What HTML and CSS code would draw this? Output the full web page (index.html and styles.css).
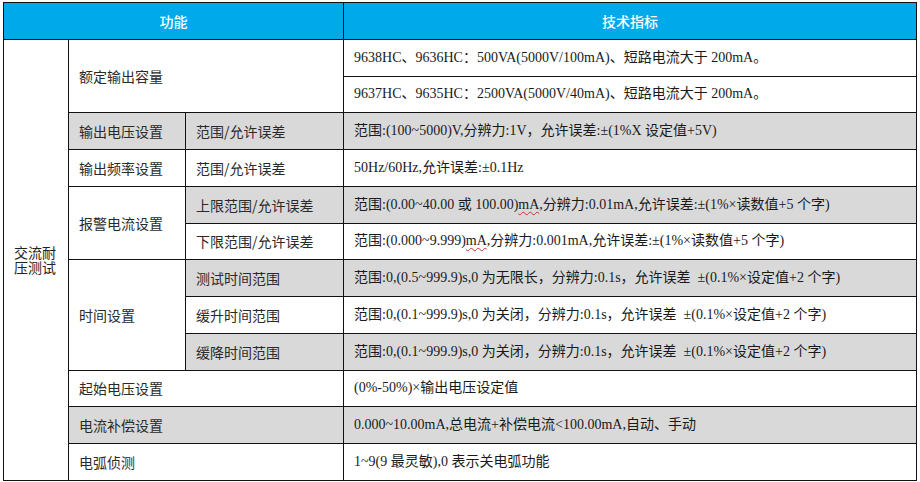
FILE: index.html
```html
<!DOCTYPE html>
<html lang="zh-CN">
<head>
<meta charset="utf-8">
<link rel="stylesheet" href="styles.css">
</head>
<body>
<div class="wrap">
<table class="spec">
  <colgroup>
    <col class="c1"><col class="c2"><col class="c3"><col class="c4">
  </colgroup>
  <thead>
    <tr class="head">
      <th colspan="3">功能</th>
      <th>技术指标</th>
    </tr>
  </thead>
  <tbody>
    <tr>
      <td rowspan="12" class="group">交流耐压测试</td>
      <td colspan="2" rowspan="2" class="label">额定输出容量</td>
      <td class="val">9638HC、9636HC：500VA(5000V/100mA)、短路电流大于 200mA。</td>
    </tr>
    <tr>
      <td class="val">9637HC、9635HC：2500VA(5000V/40mA)、短路电流大于 200mA。</td>
    </tr>
    <tr class="gray">
      <td class="label">输出电压设置</td>
      <td class="label">范围/允许误差</td>
      <td class="val">范围:(100~5000)V,分辨力:1V，允许误差:±(1%X 设定值+5V)</td>
    </tr>
    <tr>
      <td class="label">输出频率设置</td>
      <td class="label">范围/允许误差</td>
      <td class="val">50Hz/60Hz,允许误差:±0.1Hz</td>
    </tr>
    <tr>
      <td rowspan="2" class="label white">报警电流设置</td>
      <td class="label shade">上限范围/允许误差</td>
      <td class="val shade">范围:(0.00~40.00 或 100.00)<span class="spell">mA</span>,分辨力:0.01mA,允许误差:±(1%×读数值+5 个字)</td>
    </tr>
    <tr>
      <td class="label">下限范围/允许误差</td>
      <td class="val">范围:(0.000~9.999)<span class="spell">mA</span>,分辨力:0.001mA,允许误差:±(1%×读数值+5 个字)</td>
    </tr>
    <tr>
      <td rowspan="3" class="label white">时间设置</td>
      <td class="label shade">测试时间范围</td>
      <td class="val shade">范围:0,(0.5~999.9)s,0 为无限长，分辨力:0.1s，允许误差&nbsp; ±(0.1%×设定值+2 个字)</td>
    </tr>
    <tr>
      <td class="label">缓升时间范围</td>
      <td class="val">范围:0,(0.1~999.9)s,0 为关闭，分辨力:0.1s，允许误差&nbsp; ±(0.1%×设定值+2 个字)</td>
    </tr>
    <tr>
      <td class="label shade">缓降时间范围</td>
      <td class="val shade">范围:0,(0.1~999.9)s,0 为关闭，分辨力:0.1s，允许误差&nbsp; ±(0.1%×设定值+2 个字)</td>
    </tr>
    <tr>
      <td colspan="2" class="label">起始电压设置</td>
      <td class="val">(0%-50%)×输出电压设定值</td>
    </tr>
    <tr class="gray">
      <td colspan="2" class="label">电流补偿设置</td>
      <td class="val">0.000~10.00mA,总电流+补偿电流&lt;100.00mA,自动、手动</td>
    </tr>
    <tr>
      <td colspan="2" class="label">电弧侦测</td>
      <td class="val">1~9(9 最灵敏),0 表示关电弧功能</td>
    </tr>
  </tbody>
</table>
</div>
</body>
</html>
```

FILE: styles.css
```css
html, body {
  margin: 0;
  padding: 0;
  background: #ffffff;
}

.wrap {
  padding: 2px 0 0 3px;
}

.spec {
  border-collapse: collapse;
  table-layout: fixed;
  width: 913px;
  font-family: "Noto Sans CJK SC", "Liberation Sans", sans-serif;
  font-size: 14px;
  color: #222;
}

.c1 { width: 65px; }
.c2 { width: 117px; }
.c3 { width: 158px; }
.c4 { width: 573px; }

.spec th,
.spec td {
  border: 1px solid #111;
  height: 35.75px;
  padding: 0 10px;
  vertical-align: middle;
  text-align: left;
  white-space: nowrap;
  line-height: 14px;
}

.head th {
  background: #00aaea;
  color: #fff;
  text-align: center;
  font-weight: 500;
  font-size: 14px;
}

.group {
  white-space: normal !important;
  word-break: break-all;
  line-height: 15px !important;
}

.label {
  color: #2a2a2a;
}

.val {
  font-family: "Liberation Serif", "Noto Sans CJK SC", serif;
  font-size: 14px;
  color: #1a1a1a;
}

.gray td,
.shade {
  background: #d9d9d9;
}

.gray td.white,
.white {
  background: #ffffff;
}

.spell {
  text-decoration: underline wavy #d03030;
  text-decoration-thickness: 1px;
  text-underline-offset: 2px;
}
```
